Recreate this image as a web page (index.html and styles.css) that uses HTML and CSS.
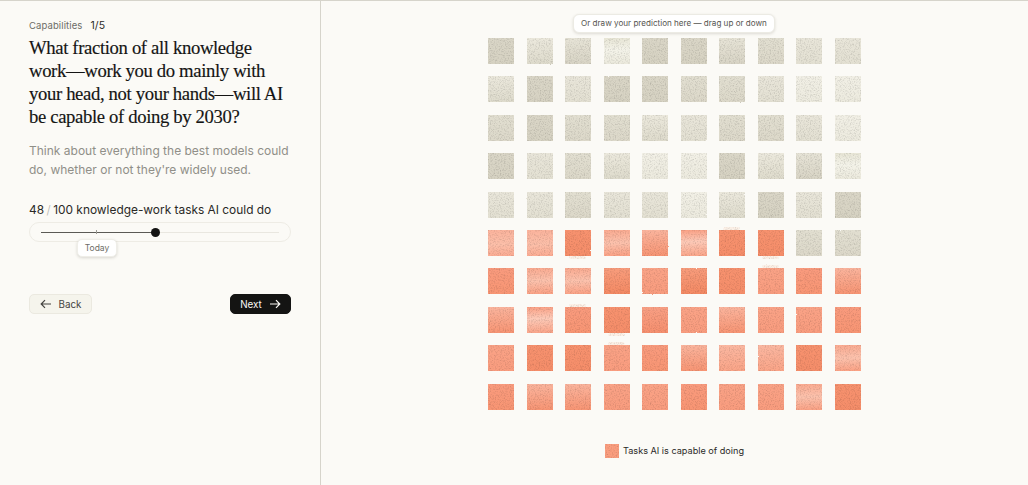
FILE: index.html
```html
<!DOCTYPE html>
<html lang="en">
<head>
<meta charset="utf-8">
<title>Capabilities</title>
<link rel="stylesheet" href="styles.css">
</head>
<body>
<svg class="defs" width="0" height="0" aria-hidden="true">
  <filter id="paper" x="-2%" y="-2%" width="104%" height="104%" color-interpolation-filters="sRGB">
    <feTurbulence type="fractalNoise" baseFrequency="0.5" numOctaves="2" seed="7" result="edge"/>
    <feDisplacementMap in="SourceGraphic" in2="edge" scale="1.6" xChannelSelector="R" yChannelSelector="G" result="moved"/>
    <feGaussianBlur in="moved" stdDeviation="0.3" result="rough"/>
    <feTurbulence type="fractalNoise" baseFrequency="0.8" numOctaves="2" seed="3" result="fine"/>
    <feColorMatrix in="fine" type="matrix" values="0.35 0 0 0 0.81  0.35 0 0 0 0.81  0.35 0 0 0 0.81  0 0 0 0 1" result="grain"/>
    <feBlend in="rough" in2="grain" mode="multiply" result="mixed"/>
    <feComposite in="mixed" in2="rough" operator="in"/>
  </filter>
</svg>
<div class="page">
  <aside class="panel">
    <div class="eyebrow"><span class="section">Capabilities</span><span class="step">1/5</span></div>
    <h1 class="question">What fraction of all knowledge work—work you do mainly with your head, not your hands—will AI be capable of doing by 2030?</h1>
    <p class="hint">Think about everything the best models could do, whether or not they're widely used.</p>
    <div class="readout"><span>48</span><span class="slash">/</span><span>100 knowledge-work tasks AI could do</span></div>
    <div class="slider">
      <div class="track">
        <div class="fill" style="width:48%"><span class="thumb"></span></div>
        <span class="tick"></span>
      </div>
      <span class="today">Today</span>
    </div>
    <div class="actions">
      <button class="btn btn-back">
        <svg class="arrow" viewBox="0 0 12 10" width="12" height="10"><path d="M11 5H1.4M5 1.2 1.2 5 5 8.8"/></svg>
        Back
      </button>
      <button class="btn btn-next">
        Next
        <svg class="arrow" viewBox="0 0 12 10" width="12" height="10"><path d="M1 5h9.6M7 1.2 10.8 5 7 8.8"/></svg>
      </button>
    </div>
  </aside>
  <main class="canvas">
    <div class="draw-tip">Or draw your prediction here — drag up or down</div>
    <div class="grid">
      <i class="c g4"></i><i class="c g2 w"></i><i class="c g3 w"></i><i class="c g1 w"></i><i class="c g4"></i><i class="c g4"></i><i class="c g3 w"></i><i class="c g3"></i><i class="c g2"></i><i class="c g2"></i>
      <i class="c g2 w"></i><i class="c g4"></i><i class="c g2"></i><i class="c g4"></i><i class="c g4"></i><i class="c g3"></i><i class="c g3"></i><i class="c g2"></i><i class="c g1"></i><i class="c g1"></i>
      <i class="c g3"></i><i class="c g4"></i><i class="c g3"></i><i class="c g3"></i><i class="c g2 w"></i><i class="c g2"></i><i class="c g3"></i><i class="c g3"></i><i class="c g2"></i><i class="c g1"></i>
      <i class="c g4"></i><i class="c g2"></i><i class="c g3"></i><i class="c g2 w"></i><i class="c g1"></i><i class="c g1"></i><i class="c g4"></i><i class="c g2 w"></i><i class="c g3 w"></i><i class="c g1 w"></i>
      <i class="c g2"></i><i class="c g2"></i><i class="c g3"></i><i class="c g2"></i><i class="c g2"></i><i class="c g1"></i><i class="c g2 w"></i><i class="c g4"></i><i class="c g2"></i><i class="c g4"></i>
      <i class="c o1"></i><i class="c o1"></i><i class="c o5 bleed-b"></i><i class="c o2 w"></i><i class="c o3 w"></i><i class="c o1 w"></i><i class="c o5 bleed-t"></i><i class="c o5 bleed-b"></i><i class="c g3"></i><i class="c g3"></i>
      <i class="c o4"></i><i class="c o2 w"></i><i class="c o2 w"></i><i class="c o5 w"></i><i class="c o3"></i><i class="c o5 w"></i><i class="c o5"></i><i class="c o3 bleed-t"></i><i class="c o4"></i><i class="c o3 w"></i>
      <i class="c o3 w"></i><i class="c o1 w"></i><i class="c o4 bleed-t"></i><i class="c o5 bleed-b"></i><i class="c o4 w"></i><i class="c o3"></i><i class="c o3 w"></i><i class="c o3"></i><i class="c o3"></i><i class="c o4"></i>
      <i class="c o3"></i><i class="c o5"></i><i class="c o5"></i><i class="c o3 bleed-t"></i><i class="c o4"></i><i class="c o3 w"></i><i class="c o2"></i><i class="c o2"></i><i class="c o5"></i><i class="c o2 w"></i>
      <i class="c o4"></i><i class="c o3 w"></i><i class="c o3 w"></i><i class="c o3"></i><i class="c o3"></i><i class="c o4"></i><i class="c o3"></i><i class="c o3"></i><i class="c o2 w"></i><i class="c o5"></i>
    </div>
    <div class="legend"><span class="swatch"></span><span>Tasks AI is capable of doing</span></div>
  </main>
</div>
</body>
</html>
```

FILE: styles.css
```css
* { box-sizing: border-box; }
html, body { margin: 0; height: 100%; overflow: hidden; }
body {
  background: #fbfaf6;
  color: #141413;
  font-family: "Inter", "Liberation Sans", sans-serif;
}
.defs { position: absolute; }
.page {
  display: flex;
  height: 485px;
  border-top: 1px solid #d6d4cb;
}

/* Left panel */
.panel {
  width: 321px;
  flex: none;
  border-right: 1.5px solid #d6d4cb;
  padding: 18px 29px 0;
}
.eyebrow {
  display: flex;
  gap: 8px;
  font-size: 9.5px;
  line-height: 13px;
  letter-spacing: 0.1px;
}
.section { color: #6d6c66; }
.step { color: #2c2b28; font-size: 10.5px; }
.question {
  margin: 5px 0 0;
  font-family: "Liberation Serif", serif;
  font-weight: 400;
  font-size: 18.7px;
  line-height: 22.9px;
  letter-spacing: -0.36px;
  -webkit-text-stroke: 0.15px #141413;
  color: #141413;
}
.hint {
  margin: 12px 0 0;
  font-size: 12px;
  line-height: 19.3px;
  color: #908f88;
}
.readout {
  display: flex;
  margin-top: 23px;
  font-size: 11.9px;
  line-height: 16px;
  color: #2a2926;
}
.slash { color: #b5b3ac; font-weight: 300; margin: 0 2.5px; }
.slider {
  position: relative;
  margin-top: 4px;
  height: 20px;
  width: 262px;
  border: 1px solid #eeece5;
  border-radius: 10px;
  padding: 0 11px;
  display: flex;
  align-items: center;
}
.track {
  position: relative;
  flex: 1;
  height: 1px;
  background: #e9e7e0;
}
.fill {
  position: relative;
  height: 1px;
  background: #5b5a55;
}
.thumb {
  position: absolute;
  right: -4.5px;
  top: -4px;
  width: 9px;
  height: 9px;
  border-radius: 50%;
  background: #141413;
}
.tick {
  position: absolute;
  left: 55px;
  top: -2px;
  width: 1px;
  height: 4px;
  background: #9c9b94;
}
.today {
  position: absolute;
  left: 47px;
  top: 16px;
  width: 40px;
  height: 18px;
  border-radius: 5px;
  background: #fff;
  border: 1px solid #efeee8;
  box-shadow: 0 1px 3px rgba(60, 55, 40, .18);
  font-size: 8.5px;
  line-height: 16px;
  text-align: center;
  color: #6d6c66;
}
.actions {
  display: flex;
  justify-content: space-between;
  margin-top: 52px;
  width: 262px;
}
.btn {
  display: flex;
  align-items: center;
  justify-content: center;
  height: 20px;
  border-radius: 5px;
  font: inherit;
  font-size: 9.8px;
  padding: 0;
}
.btn-back {
  width: 63px;
  gap: 7px;
  background: #f5f4ec;
  border: 1px solid #ebe9e0;
  color: #44433f;
}
.btn-next {
  width: 61px;
  gap: 7px;
  background: #141413;
  border: 1px solid #141413;
  color: #fbfaf6;
}
.arrow {
  fill: none;
  stroke: currentColor;
  stroke-width: 1.2;
}

/* Right canvas */
.canvas {
  position: relative;
  flex: 1;
  display: flex;
  flex-direction: column;
  align-items: center;
  padding-top: 37px;
}
.draw-tip {
  position: absolute;
  left: 252px;
  top: 13px;
  width: 202px;
  height: 19px;
  border-radius: 6px;
  background: #fff;
  border: 1px solid #ecebe4;
  box-shadow: 0 1px 3px rgba(60, 55, 40, .16);
  font-size: 8.1px;
  line-height: 17px;
  text-align: center;
  color: #55544f;
}
.grid {
  display: grid;
  grid-template-columns: repeat(10, 26px);
  grid-auto-rows: 26px;
  gap: 12.4px 12.5px;
  filter: url(#paper);
}
.c { display: block; position: relative; }

/* Grey tones: 1 lightest to 4 darkest */
.g1 { background: linear-gradient(178deg, #f2f0e6, #ecEade); }
.g2 { background: linear-gradient(178deg, #e9e6da, #e3e0d2); }
.g3 { background: linear-gradient(178deg, #e2dfd1, #dcd8c9); }
.g4 { background: linear-gradient(178deg, #dad6c7, #d6d2c2); }
.g1.w { background: linear-gradient(178deg, #e7e5d5, #f4f3e9 45%, #ebe9dc); }
.g2.w { background: linear-gradient(178deg, #ece9dd, #dedbcc); }
.g3.w { background: linear-gradient(178deg, #e7e4d7, #d8d4c5); }

/* Orange tones: 1 lightest to 5 darkest */
.o1 { background: linear-gradient(178deg, #fbb39c, #fcbfa9 55%, #fbab92); }
.o2 { background: linear-gradient(178deg, #fbb8a2, #faa487); }
.o3 { background: linear-gradient(178deg, #faa387, #f99c7e); }
.o4 { background: linear-gradient(178deg, #f99b7e, #f89573); }
.o5 { background: linear-gradient(178deg, #f7926f, #f58d69); }
.o2.w { background: linear-gradient(178deg, #faaa90, #fcc2ad 50%, #faa083); }
.o3.w { background: linear-gradient(178deg, #fbb59e, #f79473); }
.o4.w { background: linear-gradient(178deg, #f9a085, #f68f6e); }
.o5.w { background: linear-gradient(178deg, #f89d7d, #f48963); }
.o1.w { background: linear-gradient(178deg, #faa084, #fdcaB8 45%, #faa488); }

/* Faint wash that bleeds past a square */
.bleed-b::after,
.bleed-t::after {
  content: "";
  position: absolute;
  left: 4px;
  right: 5px;
  height: 3px;
  background: #fcf0e6;
  border-radius: 2px;
}
.bleed-b::after { bottom: -3px; }
.bleed-t::after { top: -3px; }

.legend {
  display: flex;
  align-items: center;
  gap: 4px;
  margin-top: 34px;
  font-size: 9.15px;
  line-height: 14px;
  color: #2a2926;
}
.swatch {
  width: 14px;
  height: 14px;
  background: #fa9d7e;
  filter: url(#paper);
}
```
